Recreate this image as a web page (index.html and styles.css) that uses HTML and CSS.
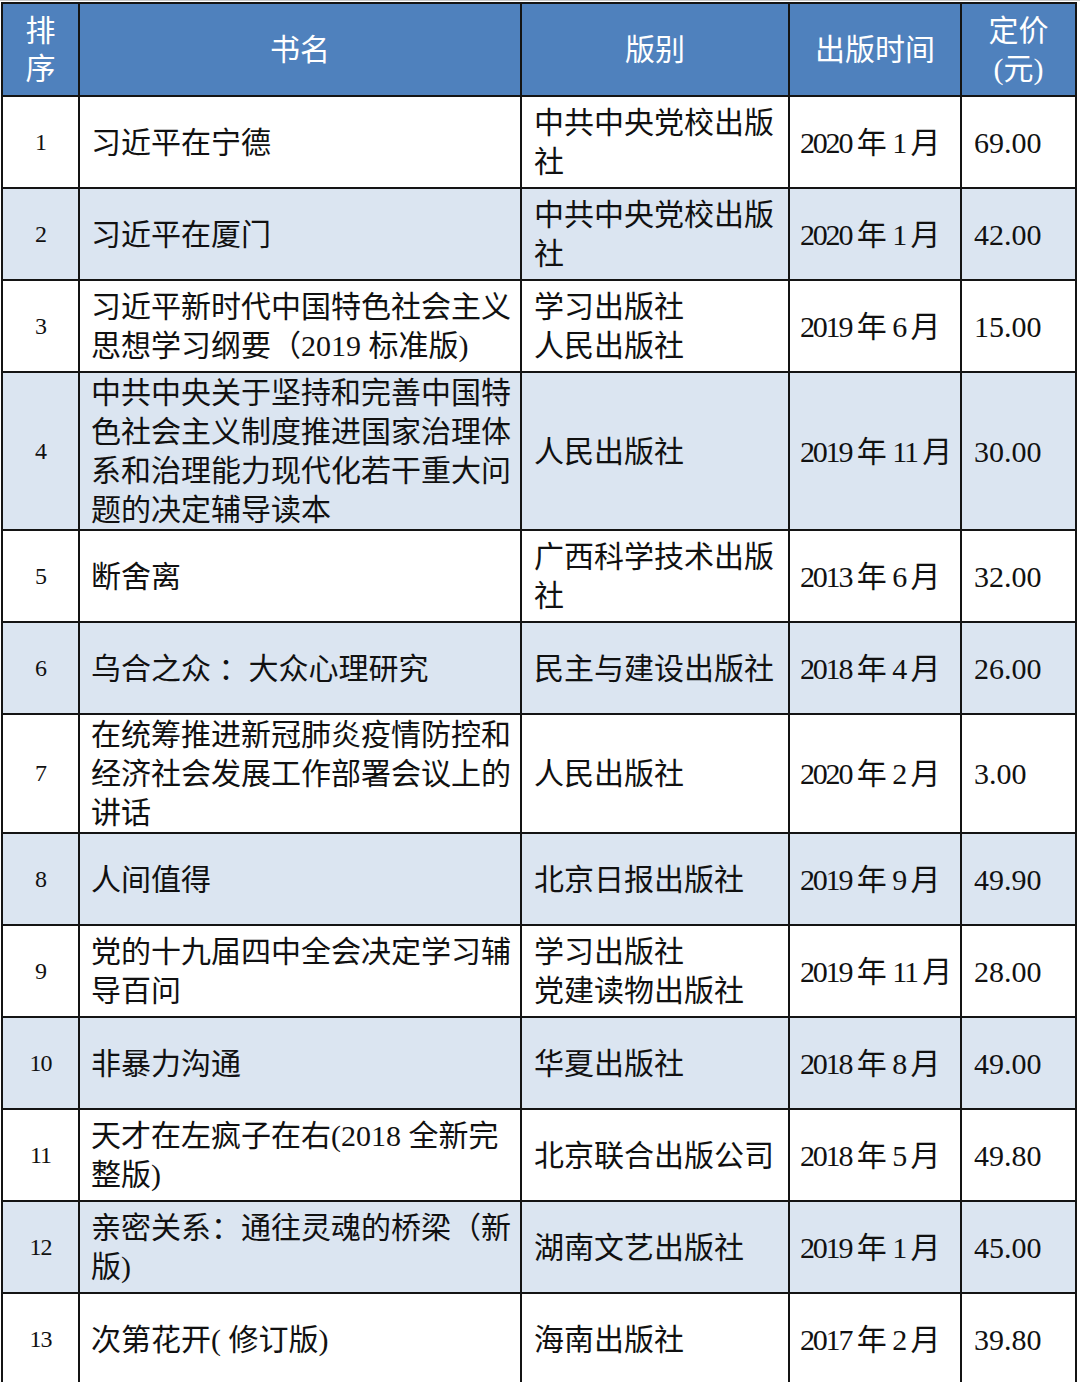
FILE: index.html
```html
<!DOCTYPE html>
<html lang="zh-CN">
<head>
<meta charset="utf-8">
<title>书单</title>
<link rel="stylesheet" href="styles.css">
</head>
<body>
<div class="page">
<table class="books">
  <colgroup>
    <col class="c-no">
    <col class="c-name">
    <col class="c-pub">
    <col class="c-date">
    <col class="c-price">
  </colgroup>
  <thead>
    <tr class="head">
      <th>排<br>序</th>
      <th>书名</th>
      <th>版别</th>
      <th>出版时间</th>
      <th>定价<br>(元)</th>
    </tr>
  </thead>
  <tbody>
    <tr>
      <td class="no">1</td>
      <td class="name">习近平在宁德</td>
      <td class="pub">中共中央党校出版<br>社</td>
      <td class="date"><span class="y">2020</span> 年 <span class="m">1</span> 月</td>
      <td class="price">69.00</td>
    </tr>
    <tr class="alt">
      <td class="no">2</td>
      <td class="name">习近平在厦门</td>
      <td class="pub">中共中央党校出版<br>社</td>
      <td class="date"><span class="y">2020</span> 年 <span class="m">1</span> 月</td>
      <td class="price">42.00</td>
    </tr>
    <tr>
      <td class="no">3</td>
      <td class="name">习近平新时代中国特色社会主义<br>思想学习纲要（2019 标准版)</td>
      <td class="pub">学习出版社<br>人民出版社</td>
      <td class="date"><span class="y">2019</span> 年 <span class="m">6</span> 月</td>
      <td class="price">15.00</td>
    </tr>
    <tr class="alt">
      <td class="no">4</td>
      <td class="name">中共中央关于坚持和完善中国特<br>色社会主义制度推进国家治理体<br>系和治理能力现代化若干重大问<br>题的决定辅导读本</td>
      <td class="pub">人民出版社</td>
      <td class="date"><span class="y">2019</span> 年 <span class="m">11</span> 月</td>
      <td class="price">30.00</td>
    </tr>
    <tr>
      <td class="no">5</td>
      <td class="name">断舍离</td>
      <td class="pub">广西科学技术出版<br>社</td>
      <td class="date"><span class="y">2013</span> 年 <span class="m">6</span> 月</td>
      <td class="price">32.00</td>
    </tr>
    <tr class="alt">
      <td class="no">6</td>
      <td class="name">乌合之众 ：大众心理研究</td>
      <td class="pub">民主与建设出版社</td>
      <td class="date"><span class="y">2018</span> 年 <span class="m">4</span> 月</td>
      <td class="price">26.00</td>
    </tr>
    <tr>
      <td class="no">7</td>
      <td class="name">在统筹推进新冠肺炎疫情防控和<br>经济社会发展工作部署会议上的<br>讲话</td>
      <td class="pub">人民出版社</td>
      <td class="date"><span class="y">2020</span> 年 <span class="m">2</span> 月</td>
      <td class="price">3.00</td>
    </tr>
    <tr class="alt">
      <td class="no">8</td>
      <td class="name">人间值得</td>
      <td class="pub">北京日报出版社</td>
      <td class="date"><span class="y">2019</span> 年 <span class="m">9</span> 月</td>
      <td class="price">49.90</td>
    </tr>
    <tr>
      <td class="no">9</td>
      <td class="name">党的十九届四中全会决定学习辅<br>导百问</td>
      <td class="pub">学习出版社<br>党建读物出版社</td>
      <td class="date"><span class="y">2019</span> 年 <span class="m">11</span> 月</td>
      <td class="price">28.00</td>
    </tr>
    <tr class="alt">
      <td class="no">10</td>
      <td class="name">非暴力沟通</td>
      <td class="pub">华夏出版社</td>
      <td class="date"><span class="y">2018</span> 年 <span class="m">8</span> 月</td>
      <td class="price">49.00</td>
    </tr>
    <tr>
      <td class="no">11</td>
      <td class="name">天才在左疯子在右(2018 全新完<br>整版)</td>
      <td class="pub">北京联合出版公司</td>
      <td class="date"><span class="y">2018</span> 年 <span class="m">5</span> 月</td>
      <td class="price">49.80</td>
    </tr>
    <tr class="alt">
      <td class="no">12</td>
      <td class="name">亲密关系：通往灵魂的桥梁（新<br>版)</td>
      <td class="pub">湖南文艺出版社</td>
      <td class="date"><span class="y">2019</span> 年 <span class="m">1</span> 月</td>
      <td class="price">45.00</td>
    </tr>
    <tr>
      <td class="no">13</td>
      <td class="name">次第花开( 修订版)</td>
      <td class="pub">海南出版社</td>
      <td class="date"><span class="y">2017</span> 年 <span class="m">2</span> 月</td>
      <td class="price">39.80</td>
    </tr>
  </tbody>
</table>
</div>
</body>
</html>
```
FILE: styles.css
```css
html, body {
  margin: 0;
  padding: 0;
  background: #ffffff;
}

.page {
  border-top: 1px solid #c8c8c8;
  padding: 1px 0 0 1px;
}

.books {
  border-collapse: collapse;
  table-layout: fixed;
  width: 1074px;
  font-family: "Liberation Serif", "Noto Sans CJK SC", serif;
  font-size: 30px;
  line-height: 39px;
  color: #111111;
}

.c-no { width: 77px; }
.c-name { width: 442px; }
.c-pub { width: 268px; }
.c-date { width: 172px; }
.c-price { width: 115px; }

.books th,
.books td {
  border: 2px solid #141414;
  vertical-align: middle;
  padding: 0;
  white-space: nowrap;
  overflow: hidden;
}

.head {
  height: 93px;
  background: #4f81bd;
}

.head th {
  color: #ffffff;
  font-weight: normal;
  text-align: center;
  line-height: 38px;
}

.books tbody tr {
  height: 92px;
  background: #ffffff;
}

.books tbody tr.alt {
  background: #dbe5f1;
}

.no {
  text-align: center;
  font-size: 24px;
  letter-spacing: -1px;
}

.name {
  padding-left: 11px !important;
}

.pub {
  padding-left: 12px !important;
}

.date {
  padding-left: 10px !important;
  word-spacing: -2px;
}

.date .y,
.date .m {
  letter-spacing: -2.2px;
}

.price {
  padding-left: 12px !important;
}
```
